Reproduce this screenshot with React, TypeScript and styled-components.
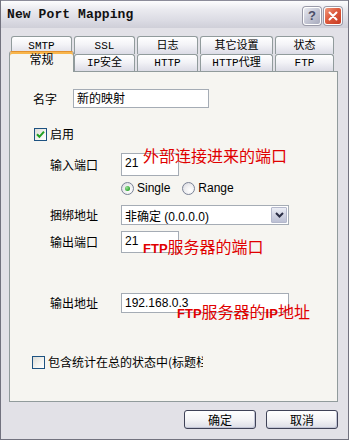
import React from "react";
import styled, { createGlobalStyle, css } from "styled-components";

const GlobalStyle = createGlobalStyle`
  html, body { margin: 0; padding: 0; background: #e2e1e7; }
  body { font-family: "Noto Sans CJK SC", "Liberation Sans", sans-serif; font-size: 12px; color: #000; }
  * { box-sizing: border-box; }
`;

const Window = styled.div`
  width: 349px;
  height: 440px;
  display: flex;
  flex-direction: column;
  background: #e2e1e7;
  border: 1px solid #72727f;
  border-top: none;
  overflow: hidden;
`;

const TitleBar = styled.div`
  height: 28px;
  flex: 0 0 auto;
  display: flex;
  align-items: center;
  justify-content: space-between;
  padding: 0 6px 0 6px;
  background: linear-gradient(#fdfdfe 0%, #ebebf0 30%, #dcdce4 70%, #cfcfd8 100%);
  border-top: 1px solid #8c8c9a;
`;

const Title = styled.span`
  font-family: "Liberation Mono", "DejaVu Sans Mono", monospace;
  font-weight: bold;
  font-size: 13px;
  letter-spacing: 0.1px;
  color: #111;
`;

const TitleButtons = styled.div`
  display: flex;
  gap: 3px;
  margin-top: 2px;
`;

const TitleButton = styled.div<{ $close?: boolean }>`
  width: 18px;
  height: 18px;
  border: 1px solid #fff;
  border-radius: 3px;
  display: flex;
  align-items: center;
  justify-content: center;
  box-shadow: 0 0 0 1px #9a9aa8;
  background: ${(p) =>
    p.$close
      ? "linear-gradient(135deg, #f09a7e 0%, #dd5a3c 45%, #c83a22 100%)"
      : "linear-gradient(135deg, #e8e9f0 0%, #c4c6d4 50%, #a8abbd 100%)"};
  color: ${(p) => (p.$close ? "#fff" : "#4a4d66")};
  font-family: "Liberation Sans", sans-serif;
  font-weight: bold;
  font-size: 13px;
`;

const Client = styled.div`
  flex: 1 1 auto;
  display: flex;
  flex-direction: column;
  padding: 8px 10px 0 8px;
`;

const TabStrip = styled.div`
  display: flex;
  flex-direction: column;
  position: relative;
  z-index: 1;
`;

const TabRow = styled.div`
  display: flex;
  gap: 2px;
  margin-left: 2px;
`;

const Tab = styled.div<{ $w: number; $back?: boolean; $active?: boolean }>`
  width: ${(p) => p.$w}px;
  height: ${(p) => (p.$back ? 18 : 17)}px;
  border: 1px solid #919b9c;
  border-bottom: none;
  border-radius: 3px 3px 0 0;
  background: linear-gradient(#ffffff 0%, #f3f3f7 45%, #dcdce6 100%);
  display: flex;
  align-items: center;
  justify-content: center;
  font-family: "Liberation Mono", "Noto Sans CJK SC", monospace;
  font-size: 11px;
  color: #000;
  line-height: 1;
  padding-top: 1px;
  ${(p) =>
    p.$active &&
    css`
      width: ${p.$w + 4}px;
      margin: -3px -2px -1px -2px;
      height: 21px;
      background: #f6f5f1;
      border-top: 1px solid #e3912e;
      box-shadow: inset 0 2px 0 #f8b64c;
      position: relative;
      z-index: 2;
      align-items: flex-start;
      padding-top: 3px;
      font-size: 12px;
    `}
`;

const Pane = styled.div`
  height: 331px;
  border: 1px solid #919b9c;
  background: #f6f5f1;
  display: flex;
  flex-direction: column;
`;

const Row = styled.div<{ $top: number; $indent: number }>`
  position: relative;
  display: flex;
  align-items: center;
  margin-top: ${(p) => p.$top}px;
  padding-left: ${(p) => p.$indent}px;
`;

const Label = styled.span<{ $w: number }>`
  width: ${(p) => p.$w}px;
  flex: 0 0 auto;
  font-size: 12px;
  line-height: 16px;
`;

const TextBox = styled.div<{ $w: number; $h: number; $alignTop?: boolean }>`
  width: ${(p) => p.$w}px;
  height: ${(p) => p.$h}px;
  border: 1px solid #a5acb5;
  background: #fff;
  display: flex;
  align-items: ${(p) => (p.$alignTop ? "flex-start" : "center")};
  padding: ${(p) => (p.$alignTop ? "2px 3px 0" : "0 3px")};
  font-family: "Liberation Sans", "Noto Sans CJK SC", sans-serif;
  font-size: 12px;
  line-height: 14px;
  white-space: nowrap;
  overflow: hidden;
`;

const Check = styled.div`
  width: 13px;
  height: 13px;
  flex: 0 0 auto;
  border: 1px solid #1d5281;
  background: linear-gradient(135deg, #dcdcd7 0%, #f4f4f1 60%, #ffffff 100%);
  display: flex;
  align-items: center;
  justify-content: center;
`;

const CheckText = styled.span<{ $w?: number }>`
  margin-left: 3px;
  font-size: 12px;
  line-height: 16px;
  white-space: nowrap;
  ${(p) => p.$w && `width: ${p.$w}px; overflow: hidden;`}
`;

const Radio = styled.div<{ $on?: boolean }>`
  width: 13px;
  height: 13px;
  border-radius: 50%;
  border: 1px solid #7a8296;
  background: radial-gradient(circle at 65% 65%, #ffffff 0%, #eeeef0 50%, #d4d4dc 100%);
  display: flex;
  align-items: center;
  justify-content: center;
  &::after {
    content: "";
    display: ${(p) => (p.$on ? "block" : "none")};
    width: 5px;
    height: 5px;
    border-radius: 50%;
    background: radial-gradient(circle at 35% 35%, #9be09b 0%, #2fa52f 70%, #1f8a1f 100%);
  }
`;

const RadioItem = styled.label`
  display: flex;
  align-items: center;
  gap: 3px;
  margin-right: 12px;
  font-family: "Liberation Sans", sans-serif;
  font-size: 12px;
`;

const Select = styled.div`
  width: 168px;
  height: 20px;
  border: 1px solid #a5acb5;
  background: #fff;
  display: flex;
  align-items: center;
  justify-content: space-between;
  padding: 0 1px 0 3px;
  font-family: "Liberation Sans", "Noto Sans CJK SC", sans-serif;
  font-size: 12px;
`;

const DropButton = styled.div`
  width: 16px;
  height: 16px;
  border: 1px solid #b4b8cc;
  border-radius: 1px;
  background: linear-gradient(#eceef6 0%, #cdd0e0 60%, #bcc0d4 100%);
  display: flex;
  align-items: center;
  justify-content: center;
`;

const Note = styled.span<{ $left: number; $top: number }>`
  position: absolute;
  left: ${(p) => p.$left}px;
  top: ${(p) => p.$top}px;
  color: #e00000;
  font-family: "Noto Sans CJK SC", sans-serif;
  font-size: 16px;
  line-height: 20px;
  white-space: nowrap;
  b {
    font-family: "Liberation Sans", sans-serif;
    font-weight: bold;
    font-size: 13px;
  }
`;

const ButtonBar = styled.div`
  display: flex;
  justify-content: flex-end;
  gap: 10px;
  margin-top: 8px;
`;

const Button = styled.button`
  width: 72px;
  height: 19px;
  border: 1px solid #3f4257;
  border-radius: 3px;
  background: linear-gradient(#ffffff 0%, #f4f4f6 50%, #dcdde6 100%);
  box-shadow: inset -1px -1px 0 #c2c5d6;
  font-family: "Noto Sans CJK SC", sans-serif;
  font-size: 12px;
  line-height: 1;
  padding: 0;
  color: #000;
`;

const backTabs = [
  { t: "SMTP", w: 61 },
  { t: "SSL", w: 61 },
  { t: "日志", w: 61 },
  { t: "其它设置", w: 73 },
  { t: "状态", w: 59 },
];
const frontTabs = [
  { t: "常规", w: 61, active: true },
  { t: "IP安全", w: 61 },
  { t: "HTTP", w: 61 },
  { t: "HTTP代理", w: 73 },
  { t: "FTP", w: 59 },
];

export default function App() {
  return (
    <>
      <GlobalStyle />
      <Window>
        <TitleBar>
          <Title>New Port Mapping</Title>
          <TitleButtons>
            <TitleButton>?</TitleButton>
            <TitleButton $close>
              <svg width="10" height="10" viewBox="0 0 10 10">
                <path d="M1.5 1.5 L8.5 8.5 M8.5 1.5 L1.5 8.5" stroke="#fff" strokeWidth="2" strokeLinecap="round" />
              </svg>
            </TitleButton>
          </TitleButtons>
        </TitleBar>
        <Client>
          <TabStrip>
            <TabRow>
              {backTabs.map((t) => (
                <Tab key={t.t} $w={t.w} $back>
                  {t.t}
                </Tab>
              ))}
            </TabRow>
            <TabRow>
              {frontTabs.map((t) => (
                <Tab key={t.t} $w={t.w} $active={t.active}>
                  {t.t}
                </Tab>
              ))}
            </TabRow>
          </TabStrip>
          <Pane>
            <Row $top={17} $indent={23}>
              <Label $w={40}>名字</Label>
              <TextBox $w={136} $h={19}>
                新的映射
              </TextBox>
            </Row>
            <Row $top={18} $indent={24}>
              <Check>
                <svg width="9" height="9" viewBox="0 0 9 9">
                  <path d="M1 4.2 L3.4 6.8 L8 1.6" fill="none" stroke="#21a121" strokeWidth="2" />
                </svg>
              </Check>
              <CheckText>启用</CheckText>
            </Row>
            <Row $top={11} $indent={40}>
              <Label $w={71}>输入端口</Label>
              <TextBox $w={58} $h={23} $alignTop>
                21
              </TextBox>
              <Note $left={133} $top={-8}>
                外部连接进来的端口
              </Note>
            </Row>
            <Row $top={5} $indent={111}>
              <RadioItem>
                <Radio $on />
                Single
              </RadioItem>
              <RadioItem>
                <Radio />
                Range
              </RadioItem>
            </Row>
            <Row $top={10} $indent={40}>
              <Label $w={71}>捆绑地址</Label>
              <Select>
                <span>非确定 (0.0.0.0)</span>
                <DropButton>
                  <svg width="9" height="6" viewBox="0 0 9 6">
                    <path d="M1 1 L4.5 4.5 L8 1" fill="none" stroke="#2a2d44" strokeWidth="2" />
                  </svg>
                </DropButton>
              </Select>
            </Row>
            <Row $top={6} $indent={40}>
              <Label $w={71}>输出端口</Label>
              <TextBox $w={58} $h={22} $alignTop>
                21
              </TextBox>
              <Note $left={133} $top={5}>
                <b>FTP</b>服务器的端口
              </Note>
            </Row>
            <Row $top={40} $indent={40}>
              <Label $w={71}>输出地址</Label>
              <TextBox $w={168} $h={20} $alignTop>
                192.168.0.3
              </TextBox>
              <Note $left={167} $top={8}>
                <b>FTP</b>服务器的<b>IP</b>地址
              </Note>
            </Row>
            <Row $top={41} $indent={22}>
              <Check />
              <CheckText $w={155}>包含统计在总的状态中(标题栏)</CheckText>
            </Row>
          </Pane>
          <ButtonBar>
            <Button>确定</Button>
            <Button>取消</Button>
          </ButtonBar>
        </Client>
      </Window>
    </>
  );
}
